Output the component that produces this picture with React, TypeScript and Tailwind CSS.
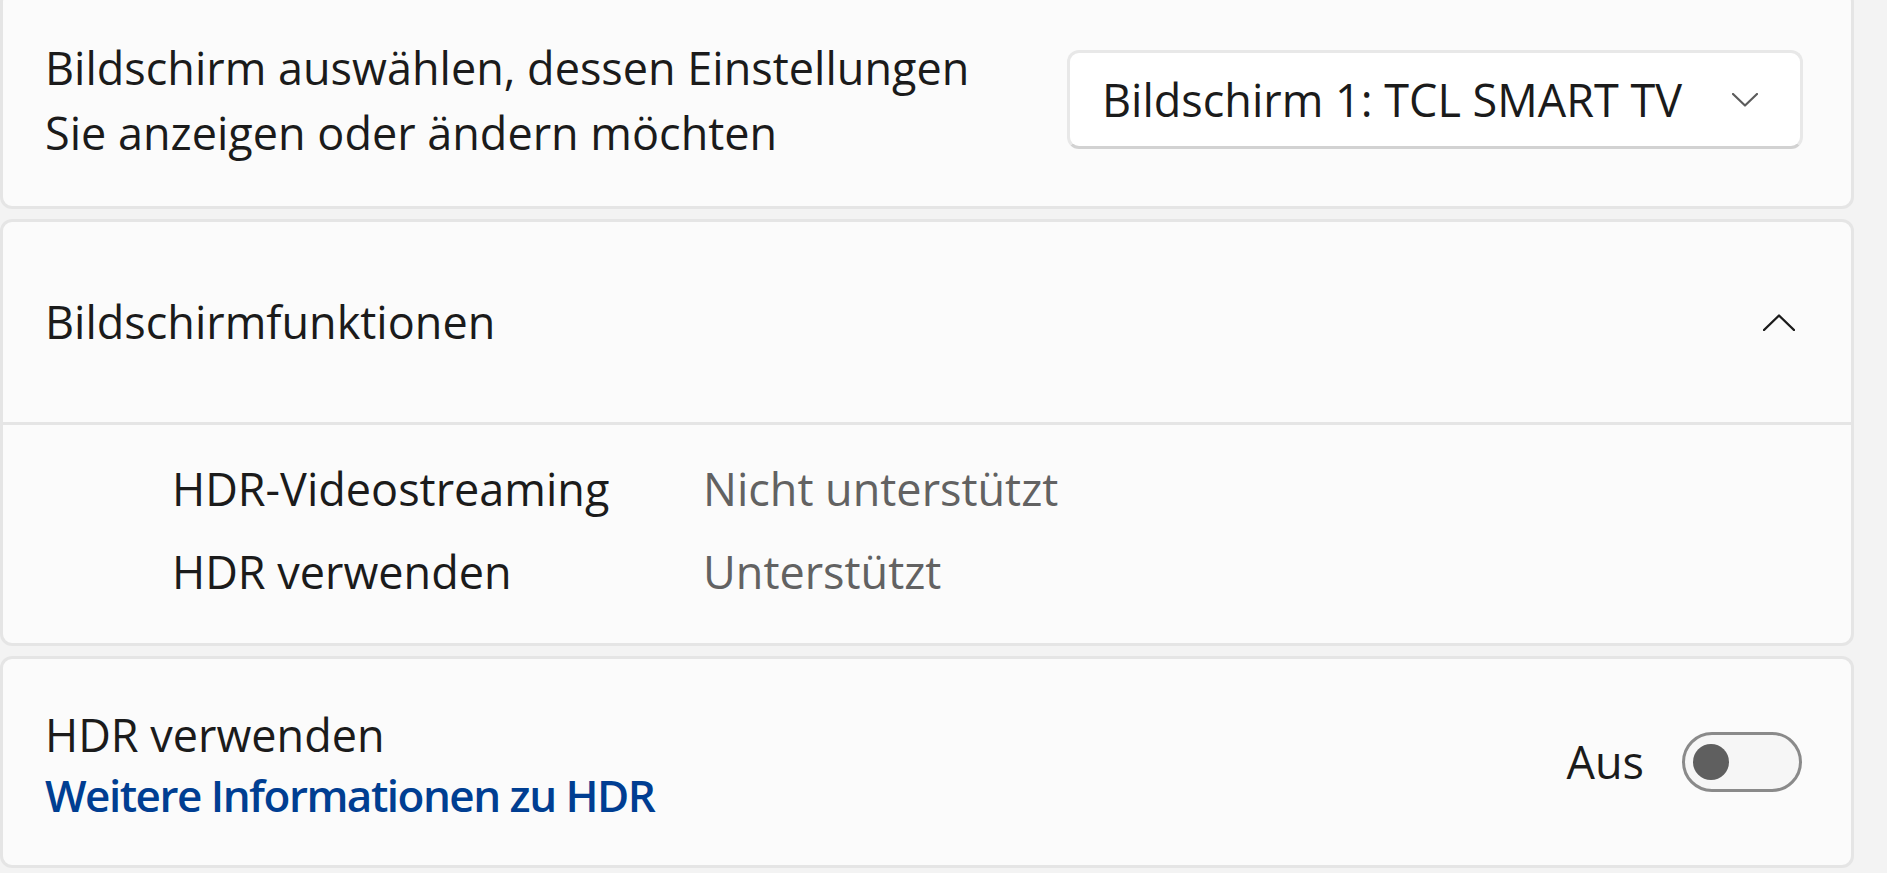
import React from "react";

function ChevronDown() {
  return (
    <svg width="26" height="14" viewBox="0 0 26 14" fill="none" className="shrink-0">
      <polyline points="1,1 13,12.5 25,1" stroke="#5c5c5c" strokeWidth="2.2" strokeLinecap="round" strokeLinejoin="round" />
    </svg>
  );
}

function ChevronUp() {
  return (
    <svg width="32" height="17" viewBox="0 0 32 17" fill="none" className="shrink-0">
      <polyline points="1,16 16,1.5 31,16" stroke="#1b1b1b" strokeWidth="2.4" strokeLinecap="round" strokeLinejoin="round" />
    </svg>
  );
}

export default function App() {
  return (
    <div className="h-[873px] w-full overflow-hidden bg-[#f3f3f3] pr-[33px] font-['Open_Sans',sans-serif] text-[45px] text-[#1b1b1b]">
      <div className="flex flex-col gap-[10px]">
        {/* Display picker */}
        <div className="-mt-[10px] flex h-[219px] items-center justify-between rounded-[12px] border-[3px] border-[#e5e5e5] bg-[#fbfbfb] pl-[42px] pr-[48px]">
          <p className="leading-[65px]">
            Bildschirm auswählen, dessen Einstellungen
            <br />
            Sie anzeigen oder ändern möchten
          </p>
          <button className="flex h-[99px] w-[736px] items-center justify-between rounded-[12px] border-[3px] border-[#e8e8e8] border-b-[#d2d2d2] bg-white pl-[32px] pr-[42px]">
            <span>Bildschirm 1: TCL SMART TV</span>
            <ChevronDown />
          </button>
        </div>

        {/* Display capabilities */}
        <div className="rounded-[12px] border-[3px] border-[#e5e5e5] bg-[#fbfbfb]">
          <div className="flex h-[200px] items-center justify-between pl-[42px] pr-[56px]">
            <span>Bildschirmfunktionen</span>
            <ChevronUp />
          </div>
          <div className="h-[3px] bg-[#e5e5e5]" />
          <div className="grid grid-cols-[531px_1fr] pl-[169px] pb-[30px] pt-[22px] leading-[83px]">
            <span>HDR-Videostreaming</span>
            <span className="text-[#626262]">Nicht unterstützt</span>
            <span>HDR verwenden</span>
            <span className="text-[#626262]">Unterstützt</span>
          </div>
        </div>

        {/* HDR toggle */}
        <div className="flex h-[212px] items-center justify-between rounded-[12px] border-[3px] border-[#e5e5e5] bg-[#fbfbfb] pl-[42px] pr-[49px]">
          <div className="flex flex-col pt-[6px] leading-[60px]">
            <span>HDR verwenden</span>
            <a className="text-[44px] font-semibold tracking-[-1.5px] text-[#003e92]">Weitere Informationen zu HDR</a>
          </div>
          <div className="flex items-center gap-[38px]">
            <span>Aus</span>
            <span className="flex h-[60px] w-[120px] items-center rounded-full border-[3px] border-[#8a8a8a] bg-[#f6f6f6] pl-[8px]">
              <span className="h-[36px] w-[36px] rounded-full bg-[#5f5f5f]" />
            </span>
          </div>
        </div>
      </div>
    </div>
  );
}
